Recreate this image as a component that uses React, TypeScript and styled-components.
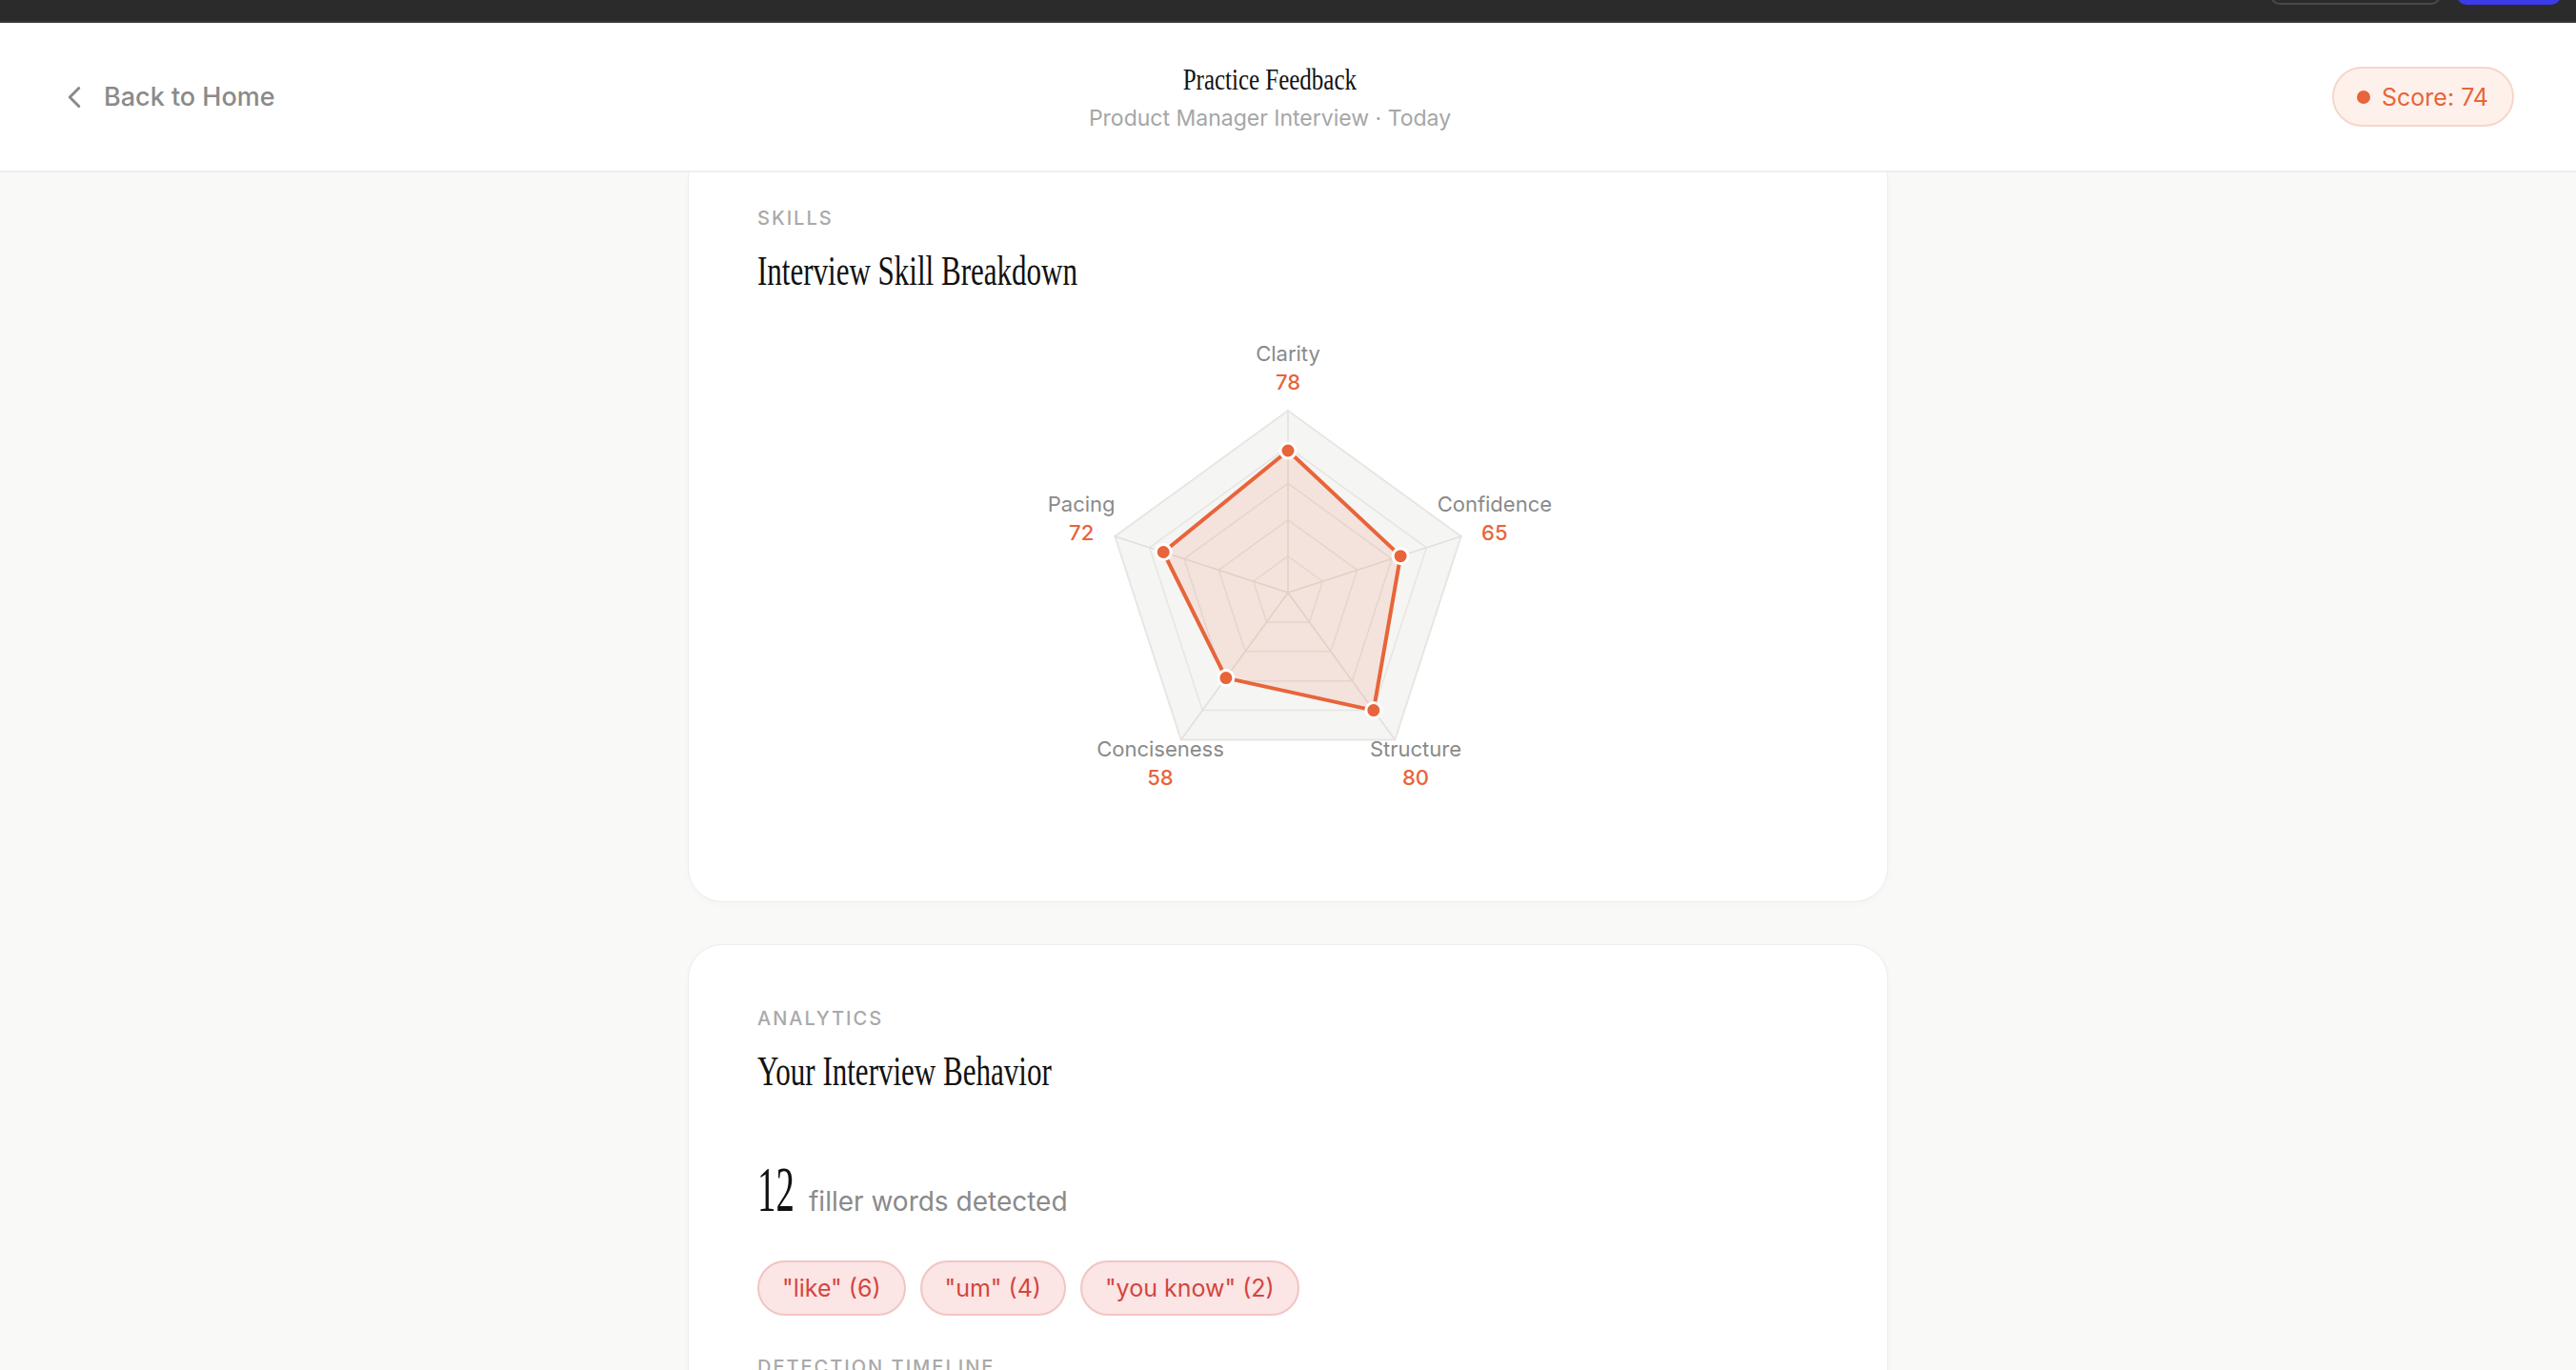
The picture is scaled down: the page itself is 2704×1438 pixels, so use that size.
import React from 'react';
import styled, { createGlobalStyle } from 'styled-components';
import { ChevronLeft } from 'lucide-react';

const ORANGE = '#e8643a';

const GlobalStyle = createGlobalStyle`
  * { box-sizing: border-box; }
  html, body { margin: 0; padding: 0; background: #f9f9f8; }
  body { font-family: Inter, "Noto Sans", "Liberation Sans", sans-serif; overflow: hidden; }
`;

const Page = styled.div`
  min-height: 100vh;
  display: flex;
  flex-direction: column;
  background: #f9f9f8;
`;

const TopBar = styled.div`
  height: 24px;
  background: #2b2b2b;
  border-bottom: 2px solid #3a3a3a;
  display: flex;
  justify-content: flex-end;
  align-items: flex-end;
  gap: 17px;
  padding-right: 16px;
  overflow: hidden;
`;

const BarButton = styled.div<{ $primary?: boolean }>`
  width: ${(p) => (p.$primary ? 109 : 179)}px;
  height: 40px;
  margin-bottom: 17px;
  border-radius: 10px;
  background: ${(p) => (p.$primary ? '#3b3be9' : '#2b2b2b')};
  border: 2px solid ${(p) => (p.$primary ? '#3b3be9' : '#4a4a4a')};
`;

const Header = styled.header`
  position: relative;
  z-index: 2;
  height: 157px;
  background: #ffffff;
  border-bottom: 2px solid #eeeeee;
  display: grid;
  grid-template-columns: 1fr auto 1fr;
  align-items: center;
  padding: 0 65px 0 59px;
`;

const BackLink = styled.a`
  display: inline-flex;
  align-items: center;
  gap: 12px;
  color: #8a8a8a;
  font-size: 27px;
  font-weight: 500;
  text-decoration: none;
  justify-self: start;
`;

const TitleBlock = styled.div`
  display: flex;
  flex-direction: column;
  align-items: center;
  margin-right: 32px;
`;

const Title = styled.h1`
  margin: 0;
  font-family: "Liberation Serif", "Times New Roman", serif;
  font-weight: 400;
  font-size: 32px;
  line-height: 38px;
  color: #111111;
  transform: scaleX(0.78);
  white-space: nowrap;
`;

const Subtitle = styled.div`
  margin-top: 7px;
  font-size: 23px;
  line-height: 30px;
  color: #a6a6a6;
`;

const ScorePill = styled.div`
  justify-self: end;
  display: inline-flex;
  align-items: center;
  gap: 12px;
  height: 63px;
  padding: 0 25px 0 24px;
  border: 2px solid #f7d6ca;
  background: #fef1ec;
  border-radius: 999px;
  color: ${ORANGE};
  font-size: 25px;
`;

const Dot = styled.span`
  width: 14px;
  height: 14px;
  border-radius: 50%;
  background: ${ORANGE};
`;

const Main = styled.main`
  position: relative;
  z-index: 1;
  width: 1260px;
  margin: -30px auto 0;
  display: flex;
  flex-direction: column;
  gap: 44px;
`;

const Card = styled.section`
  background: #ffffff;
  border: 1.5px solid #ecece9;
  border-radius: 36px;
  padding: 62px 72px 72px;
  box-shadow: 0 2px 8px rgba(0, 0, 0, 0.025);
`;

const Eyebrow = styled.div<{ $gap?: number }>`
  margin-top: ${(p) => p.$gap ?? 0}px;
  font-size: 20px;
  line-height: 30px;
  letter-spacing: 2px;
  text-transform: uppercase;
  color: #a9a9a9;
  font-weight: 500;
`;

const Heading = styled.h2`
  margin: 15px 0 0;
  font-family: "Liberation Serif", "Times New Roman", serif;
  font-weight: 400;
  font-size: 44px;
  line-height: 52.8px;
  color: #111111;
  transform: scaleX(0.705);
  transform-origin: left center;
  white-space: nowrap;
`;

const ChartWrap = styled.div`
  display: flex;
  justify-content: center;
  padding: 46px 0 36px;
`;

const FillerRow = styled.div`
  display: flex;
  align-items: baseline;
  margin-top: 62px;
`;

const Count = styled.span`
  font-family: "Liberation Serif", "Times New Roman", serif;
  font-size: 68px;
  line-height: 68px;
  color: #111111;
  transform: scaleX(0.57);
  transform-origin: left center;
  display: inline-block;
  margin-right: -14px;
`;

const FillerText = styled.span`
  font-size: 28px;
  line-height: 38px;
  color: #8a8a8a;
`;

const ChipRow = styled.div`
  display: flex;
  gap: 15px;
  margin-top: 41px;
`;

const Chip = styled.span`
  display: inline-flex;
  align-items: center;
  height: 58px;
  padding: 0 24px;
  border: 2px solid #f2c5c3;
  background: #fbe5e5;
  border-radius: 29px;
  color: #d4453e;
  font-size: 25px;
`;

const CardFill = styled.div`
  height: 300px;
`;

const skills = [
  { name: 'Clarity', value: 78 },
  { name: 'Confidence', value: 65 },
  { name: 'Structure', value: 80 },
  { name: 'Conciseness', value: 58 },
  { name: 'Pacing', value: 72 },
];

const W = 600;
const H = 480;
const CX = 300;
const CY = 264;
const R = 191;

const pt = (i: number, r: number) => {
  const a = ((-90 + 72 * i) * Math.PI) / 180;
  return [CX + r * Math.cos(a), CY + r * Math.sin(a)];
};

const poly = (r: number) =>
  [0, 1, 2, 3, 4].map((i) => pt(i, r).map((v) => v.toFixed(2)).join(',')).join(' ');

const Radar: React.FC = () => {
  const dataPts = skills.map((s, i) => pt(i, (R * s.value) / 100));
  return (
    <svg width={W} height={H} viewBox={`0 0 ${W} ${H}`}>
      <polygon points={poly(R)} fill="#f5f5f3" stroke="#e6e6e3" strokeWidth={2} />
      {[1, 2, 3, 4].map((k) => (
        <polygon key={k} points={poly((R * k) / 5)} fill="none" stroke="#e6e5e2" strokeWidth={1.5} />
      ))}
      {[0, 1, 2, 3, 4].map((i) => {
        const [x, y] = pt(i, R);
        return <line key={i} x1={CX} y1={CY} x2={x} y2={y} stroke="#e2dfdb" strokeWidth={1.5} />;
      })}
      <polygon
        points={dataPts.map((p) => p.join(',')).join(' ')}
        fill="rgba(232,98,58,0.12)"
        stroke={ORANGE}
        strokeWidth={4}
        strokeLinejoin="round"
      />
      {dataPts.map(([x, y], i) => (
        <circle key={i} cx={x} cy={y} r={8} fill={ORANGE} stroke="#ffffff" strokeWidth={3} />
      ))}
      {skills.map((s, i) => {
        const [x, y0] = pt(i, 228);
        const y = i === 2 || i === 3 ? y0 + 3 : y0;
        return (
          <g key={s.name} fontFamily="Inter, 'Noto Sans', sans-serif" fontSize={22} textAnchor="middle">
            <text x={x} y={y - 15} fill="#8a8a8a">
              {s.name}
            </text>
            <text x={x} y={y + 15} fill={ORANGE} fontWeight={500}>
              {s.value}
            </text>
          </g>
        );
      })}
    </svg>
  );
};

export default function App() {
  return (
    <Page>
      <GlobalStyle />
      <TopBar>
        <BarButton />
        <BarButton $primary />
      </TopBar>
      <Header>
        <BackLink href="#">
          <ChevronLeft size={38} strokeWidth={1.9} />
          Back to Home
        </BackLink>
        <TitleBlock>
          <Title>Practice Feedback</Title>
          <Subtitle>Product Manager Interview · Today</Subtitle>
        </TitleBlock>
        <ScorePill>
          <Dot />
          Score: 74
        </ScorePill>
      </Header>
      <Main>
        <Card>
          <Eyebrow>Skills</Eyebrow>
          <Heading>Interview Skill Breakdown</Heading>
          <ChartWrap>
            <Radar />
          </ChartWrap>
        </Card>
        <Card>
          <Eyebrow>Analytics</Eyebrow>
          <Heading>Your Interview Behavior</Heading>
          <FillerRow>
            <Count>12</Count>
            <FillerText>filler words detected</FillerText>
          </FillerRow>
          <ChipRow>
            <Chip>"like" (6)</Chip>
            <Chip>"um" (4)</Chip>
            <Chip>"you know" (2)</Chip>
          </ChipRow>
          <Eyebrow $gap={39}>Detection Timeline</Eyebrow>
          <CardFill />
        </Card>
      </Main>
    </Page>
  );
}
